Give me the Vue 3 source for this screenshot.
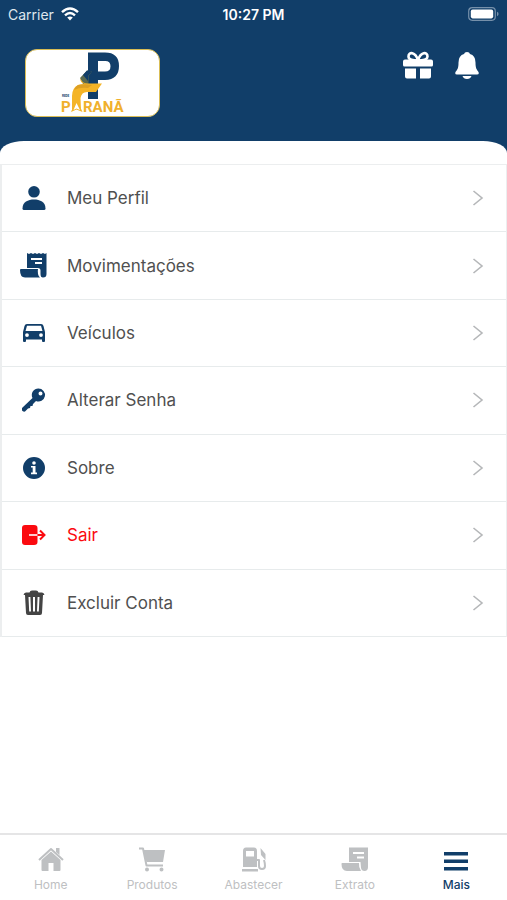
<template>
  <div class="app">
    <header class="header">
      <div class="status">
        <div class="carrier">
          <span>Carrier</span>
          <svg width="18" height="14" viewBox="0 0 18 14" fill="none" stroke="#fff" stroke-width="2.4">
            <path d="M1 5.2Q9-2.4 17 5.2" />
            <path d="M4 8.4Q9 3.8 14 8.4" />
            <path d="M6.2 10.6Q9 8.4 11.8 10.6L9 13.6Z" fill="#fff" stroke="none" />
          </svg>
        </div>
        <span class="time">10:27 PM</span>
        <svg class="battery" width="31" height="14" viewBox="0 0 31 14">
          <rect x="0.7" y="0.7" width="26.6" height="12.6" rx="3.5" fill="none" stroke="#7690aa" stroke-width="1.2" />
          <rect x="2.8" y="2.6" width="22.4" height="8.8" rx="1.8" fill="#fff" />
          <path d="M29 4.8Q30.6 5.4 30.6 7T29 9.2Z" fill="#7690aa" />
        </svg>
      </div>
      <div class="brand">
        <svg class="logo" viewBox="0 0 133 66" role="img" aria-label="Rede Paraná">
          <path fill="#113e69" fill-rule="evenodd" d="M62 2.500H79Q93 2.500 93 16T79 30H72V49H62ZM72 11V21.500H79Q84.500 21.500 84.500 16.200T79 11Z" />
          <path fill="#5b6a50" d="M54 28 61 20.500 66 21.500 62.500 26V34H57Z" />
          <path fill="#113e69" d="M57 25 61 20.500 66 21.500 62 26V31Z" />
          <path fill="#f4b427" d="M54 28Q56 33.500 62 33.500H76L70 42H61Q55.500 42 54.500 48L55 61 50.500 52 46 61V46Q46 38 52 35Q56 34 59 34Q54 33 54 28Z" />
          <path fill="#dda024" d="M52 35Q58 33.500 66 35L62 38Q54 37 48 40Q49 37 52 35Z" />
          <path fill="#f4b427" d="M50.500 49 56.500 62 50.500 59.500 45 62Z" />
          <path fill="#fff" d="M50.500 53 54 60 50.500 58.500 47.500 60Z" />
          <text class="small" x="36" y="47">REDE</text>
          <text class="word" x="35" y="62">P</text>
          <text class="word" x="57" y="62">RANÃ</text>
        </svg>
        <div class="actions">
          <button type="button" aria-label="Presentes">
            <svg width="30" height="28" viewBox="0 0 30 28" fill="#fff">
              <path d="M2 8.500H28Q30 8.500 30 10.500V14Q30 15.500 28.500 15.500H1.500Q0 15.500 0 14V10.500Q0 8.500 2 8.500ZM2 17.500H13V27.500H4Q2 27.500 2 25.500ZM17 17.500H28V25.500Q28 27.500 26 27.500H17Z" />
              <path d="M15 9.500C12 9.500 5.500 9.500 5.500 5.500C5.500 0.500 12.500 0.500 15 9.500C17.500 0.500 24.500 0.500 24.500 5.500C24.500 9.500 18 9.500 15 9.500Z" fill="none" stroke="#fff" stroke-width="2.6" />
            </svg>
          </button>
          <button type="button" aria-label="Notificações">
            <svg width="24" height="28" viewBox="0 0 24 28" fill="#fff">
              <path d="M12 1Q14.500 1 15 3Q20.500 4.500 20.500 11.500C20.500 17 21.500 18.500 23.500 21Q24.500 23.500 22 23.500H2Q-0.500 23.500 0.500 21C2.500 18.500 3.500 17 3.500 11.500Q3.500 4.500 9 3Q9.500 1 12 1ZM7.500 25H16.500Q15.500 28 12 28T7.500 25Z" />
            </svg>
          </button>
        </div>
      </div>
    </header>

    <main class="panel">
      <ul class="menu">
        <li v-for="item in items" :key="item.label">
          <button type="button" class="row" :class="item.tone">
            <svg class="icon" viewBox="0 0 28 28" fill="currentColor">
              <path v-for="d in item.paths" :key="d" :d="d" fill-rule="evenodd" />
              <path v-if="item.icon === 'exit'" d="M9 14H17.500" fill="none" stroke="#fff" stroke-width="1.600" />
              <path v-if="item.icon === 'exit'" d="M17.500 14H24M20 9.500 24.500 14 20 18.500" fill="none" stroke="currentColor" stroke-width="2" />
            </svg>
            <span class="label">{{ item.label }}</span>
            <svg class="chevron" width="12" height="16" viewBox="0 0 12 16">
              <path d="M1.500 1 10 8 1.500 15" fill="none" stroke="#b5b7b9" stroke-width="1.600" />
            </svg>
          </button>
        </li>
      </ul>
    </main>

    <nav class="tabs">
      <a v-for="tab in tabs" :key="tab.label" href="#" :class="{ active: tab.label === current }" @click.prevent="current = tab.label">
        <svg width="28" height="26" viewBox="0 0 28 26" fill="currentColor">
          <path :d="tab.path" fill-rule="evenodd" />
          <path v-if="tab.line" :d="tab.line" fill="none" stroke="currentColor" stroke-width="2" stroke-linejoin="round" />
        </svg>
        <span>{{ tab.label }}</span>
      </a>
    </nav>
  </div>
</template>

<script setup>
import { ref } from 'vue'

const current = ref('Mais')

const items = [
  {
    label: 'Meu Perfil',
    paths: [
      'M14 2A5.800 5.800 0 0 1 14 13.600A5.800 5.800 0 0 1 14 2Z',
      'M2.500 24.500C2.500 18 8 15.500 14 15.500S25.500 18 25.500 24.500Q25.500 26 24 26H4Q2.500 26 2.500 24.500Z'
    ]
  },
  {
    label: 'Movimentações',
    paths: [
      'M7 1 9 2 11 1 13 2 15 1 17 2 19 1 21 2 23 1 25 2 26.500 1V22Q26.500 25.500 23 25.500Q20.500 25.500 20.500 22V18.500Q20.500 16 18 16H7ZM11 6V8H22V6ZM15 10V12H22V10Z',
      'M1 17H18Q17.500 19 18 22Q18.500 24.500 20 25.500H5Q0 25.500 0 18Q0 17 1 17Z'
    ]
  },
  {
    label: 'Veículos',
    paths: [
      'M7 5H21Q23 5 23.500 7L25 13V22Q25 23 24 23H23Q22 23 22 22V20.500H6V22Q6 23 5 23H4Q3 23 3 22V13L4.500 7Q5 5 7 5ZM7 6.800 5.500 12H22.500L21 6.800ZM7 14.200A1.900 1.900 0 0 0 7 18A1.900 1.900 0 0 0 7 14.200ZM21 14.200A1.900 1.900 0 0 0 21 18A1.900 1.900 0 0 0 21 14.200Z'
    ]
  },
  {
    label: 'Alterar Senha',
    paths: [
      'M18.500 2.500A6.500 6.500 0 1 1 16 15L13 18 12.500 20 10.500 20 10 22 8 22.500 5 25.500Q3 26 2 24.500V22L12.500 12A6.500 6.500 0 0 1 18.500 2.500ZM20.500 5.500A2 2 0 0 0 20.500 9.500A2 2 0 0 0 20.500 5.500Z'
    ]
  },
  {
    label: 'Sobre',
    paths: [
      'M14 3A11 11 0 0 1 14 25A11 11 0 0 1 14 3ZM14 7.200A1.800 1.800 0 0 0 14 10.800A1.800 1.800 0 0 0 14 7.200ZM11 12V13.600H12.700V18.600H11V20.200H17V18.600H15.500V12Z'
    ]
  },
  {
    label: 'Sair',
    tone: 'danger',
    icon: 'exit',
    paths: ['M5 4H14Q17.500 4 17.500 7V21Q17.500 24 14 24H5Q2 24 2 21V7Q2 4 5 4Z']
  },
  {
    label: 'Excluir Conta',
    tone: 'dark',
    paths: [
      'M9.500 3.500Q10 1.500 12 1.500H16Q18 1.500 18.500 3.500H22Q24 3.500 24.500 6H23L22 24Q22 26 20 26H8Q6 26 6 24L5 6H3.500Q4 3.500 6 3.500ZM8.500 8 9.200 22.500H11L10.400 8ZM13 8V22.500H15V8ZM17.600 8 17 22.500H18.800L19.500 8Z'
    ]
  }
]

const tabs = [
  {
    label: 'Home',
    path: 'M14 5.500 23.500 14V24Q23.500 25 22.500 25H16.500V17H11.500V25H5.500Q4.500 25 4.500 24V14ZM19 2H22.500V9L19 6Z',
    line: 'M2 14 14 3 26 14'
  },
  {
    label: 'Produtos',
    path: 'M5 4H27L25 16H8.500ZM9 21.500A2 2 0 0 1 9 25.500A2 2 0 0 1 9 21.500ZM23.500 21.500A2 2 0 0 1 23.500 25.500A2 2 0 0 1 23.500 21.500Z',
    line: 'M1 2.500H5L8.500 19.500H25'
  },
  {
    label: 'Abastecer',
    path: 'M6 1.500H14Q17 1.500 17 5V21H3V5Q3 1.500 6 1.500ZM6 5V10.500H14V5ZM2 23H18V25.500H2ZM20.500 2 25.500 8V14L21 9Z',
    line: 'M17 14H19V20Q19 23 22 23T25 20Q25 17 24 14'
  },
  {
    label: 'Extrato',
    path: 'M8 1.500H27V21Q27 25 23.500 25Q20.500 25 20 22L19.500 16H8ZM12 6V8H23V6ZM16 10.500V12.500H23V10.500ZM1 17H18Q17.500 21 20 25H6Q0.500 25 0.500 18Q0.500 17 1 17Z'
  },
  {
    label: 'Mais',
    path: 'M2 6H26V9.500H2ZM2 13.500H26V17H2ZM2 21H26V24.500H2Z'
  }
]
</script>

<style scoped>
.app {
  display: flex;
  flex-direction: column;
  min-height: 100vh;
  background: #fff;
  font-family: Inter, "Liberation Sans", sans-serif;
}
button {
  padding: 0;
  border: none;
  background: none;
  font: inherit;
  cursor: pointer;
}
svg {
  display: block;
  flex: none;
}
.header {
  padding-bottom: 36px;
  background: #113e69;
}
.status {
  display: grid;
  grid-template-columns: 1fr auto 1fr;
  align-items: center;
  height: 28px;
  padding: 0 8px;
  color: #fff;
  font-size: 14px;
}
.carrier {
  display: flex;
  align-items: center;
  gap: 7px;
  color: #dfe7ee;
}
.time {
  font-weight: 600;
}
.battery {
  justify-self: end;
}
.brand {
  display: flex;
  align-items: flex-start;
  justify-content: space-between;
  padding: 21px 28px 0 25px;
}
.logo {
  box-sizing: border-box;
  width: 135px;
  height: 68px;
  border: 1px solid #d9bd55;
  border-radius: 12px;
  background: #fff;
}
.logo text {
  fill: #f0b02c;
  font-family: Roboto, sans-serif;
  font-weight: 700;
}
.logo .word {
  font-size: 15px;
}
.logo .small {
  fill: #113e69;
  font-size: 3px;
}
.actions {
  display: flex;
  gap: 22px;
  padding-top: 2px;
}
.panel {
  flex: 1;
  margin-top: -12px;
  padding-top: 23px;
  border-radius: 24px 24px 0 0 / 12px 12px 0 0;
  background: #fff;
}
.menu {
  display: grid;
  grid-auto-rows: 1fr;
  min-height: 473px;
  box-sizing: border-box;
  margin: 0;
  padding: 0;
  border: solid #eceeef;
  border-width: 1px 1px 0 2px;
  list-style: none;
}
.menu li {
  display: flex;
  border-bottom: 1px solid #e7ebec;
}
.row {
  display: flex;
  flex: 1;
  align-items: center;
  padding: 0 22px 0 18px;
  color: #113e69;
  text-align: left;
}
.icon {
  width: 28px;
  height: 28px;
}
.label {
  flex: 1;
  margin-left: 19px;
  color: #505050;
  font-size: 17px;
  line-height: 24px;
}
.dark {
  color: #444;
}
.danger,
.danger .label {
  color: #fb0a0f;
}
.tabs {
  display: flex;
  height: 65px;
  border-top: 2px solid #e5e5e6;
}
.tabs a {
  display: flex;
  flex: 1;
  flex-direction: column;
  align-items: center;
  gap: 5px;
  padding-top: 11px;
  color: #bec0c2;
  font-size: 12px;
  line-height: 16px;
  text-decoration: none;
}
.tabs .active {
  color: #113e69;
  font-weight: 500;
}
</style>

<style>
body {
  margin: 0;
}
</style>
